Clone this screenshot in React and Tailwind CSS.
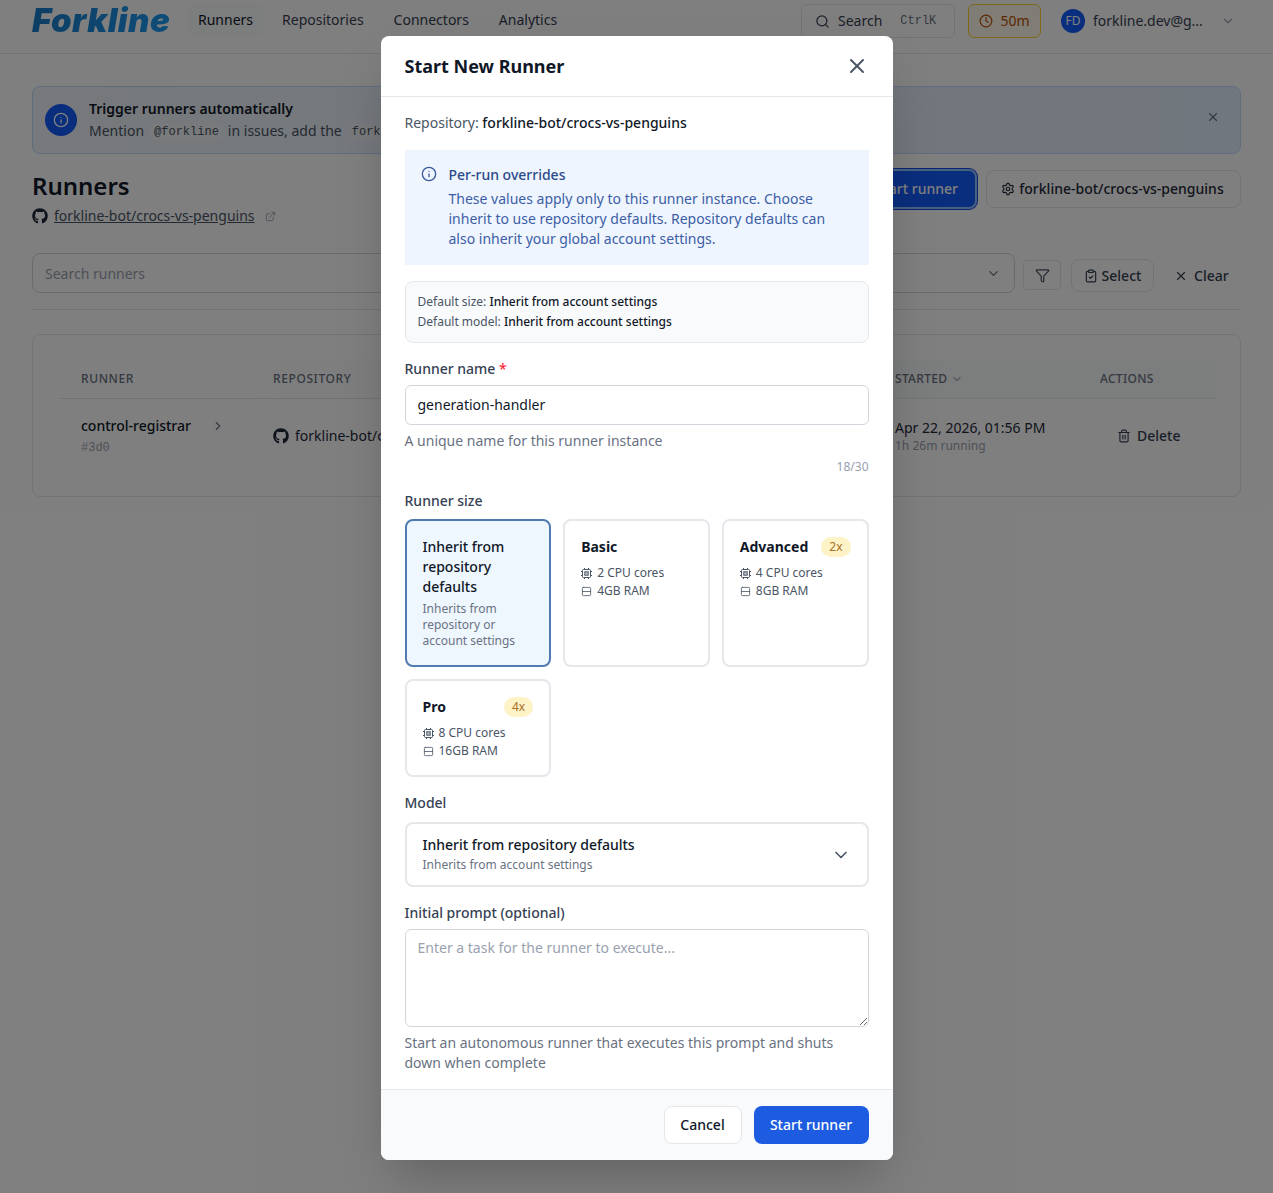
import React from 'react';
import {
  Info, X, Search, Clock, ChevronDown, ChevronRight, ExternalLink, Settings,
  Funnel, ClipboardCheck, Trash2, Rows2,
} from 'lucide-react';
import { FaGithub } from 'react-icons/fa';

// lucide's Cpu turns to mush at this size, so a simpler one
function ChipIcon() {
  return (
    <svg width="11" height="11" viewBox="0 0 11 11" fill="none" stroke="currentColor" strokeWidth="1" className="shrink-0">
      <rect x="1.5" y="1.5" width="8" height="8" rx="1" />
      <rect x="3.8" y="3.8" width="3.4" height="3.4" fill="currentColor" fillOpacity="0.35" />
      <path d="M3.5 0v1M7.5 0v1M3.5 10v1M7.5 10v1M0 3.5h1M0 7.5h1M10 3.5h1M10 7.5h1" />
    </svg>
  );
}

function Header() {
  return (
    <header className="h-[54px] border-b border-gray-200 bg-white flex items-start pl-8 pr-[38px]">
      <div className="w-[156px] h-[41px] pt-px flex items-center">
        <span className="font-['Inter',sans-serif] italic font-black text-[33px] tracking-[0.4px] pr-1 bg-linear-to-r from-[#1a7cc8] to-[#1c9cf5] bg-clip-text text-transparent">
          Forkline
        </span>
      </div>
      <nav className="flex items-center text-sm text-gray-700 h-[40px]">
        <span className="px-2.5 py-1.5 rounded-md bg-gray-50 text-gray-900">Runners</span>
        <span className="px-2.5 py-1.5 ml-[9px]">Repositories</span>
        <span className="px-2.5 py-1.5 ml-[10px]">Connectors</span>
        <span className="px-2.5 py-1.5 ml-[10px]">Analytics</span>
      </nav>
      <div className="ml-auto flex items-center h-[42px]">
        <div className="w-[154px] h-[34px] border border-gray-200 rounded-md flex items-center pl-[13px] text-sm text-gray-700">
          <Search size={15} />
          <span className="ml-2">Search</span>
          <span className="ml-[18px] font-['Liberation_Mono',monospace] text-xs text-gray-500">CtrlK</span>
        </div>
        <div className="ml-[13px] w-[73px] h-[34px] border border-amber-300 bg-amber-50 rounded-md flex items-center justify-center gap-[7px] text-sm text-amber-700">
          <Clock size={14} />
          50m
        </div>
        <div className="ml-5 w-6 h-6 rounded-full bg-blue-600 text-white text-xs flex items-center justify-center">FD</div>
        <span className="ml-2 text-sm text-gray-700 w-[110px]">forkline.dev@g...</span>
        <ChevronDown size={14} className="ml-[18px] text-gray-400" />
      </div>
    </header>
  );
}

function Background() {
  return (
    <div className="h-[1193px] bg-white overflow-hidden">
      <Header />
      <main className="px-8 pt-8 w-[1273px]">
        <div className="h-[68px] border border-blue-200 bg-linear-to-r from-[#eef3f9] to-[#e3eefc] rounded-lg flex items-center pl-3 pr-5 w-[1209px]">
          <div className="w-8 h-8 rounded-full bg-blue-600 flex items-center justify-center text-white">
            <Info size={16} />
          </div>
          <div className="ml-3">
            <div className="text-sm font-semibold text-gray-900">Trigger runners automatically</div>
            <div className="text-sm text-gray-600 mt-0.5 flex items-center gap-[5px]">
              Mention
              <code className="px-1 ml-px mt-[2px] bg-gray-100 rounded font-['Liberation_Mono',monospace] text-xs">@forkline</code>
              in issues, add the
              <code className="px-1 ml-px mt-[2px] bg-gray-100 rounded font-['Liberation_Mono',monospace] text-xs">forkline</code>
            </div>
          </div>
          <X size={14} className="ml-auto mb-1.5 text-gray-500" />
        </div>

        <div className="flex items-start justify-between mt-[16px]">
          <div>
            <h1 className="text-2xl font-semibold text-gray-900 leading-8">Runners</h1>
            <div className="flex items-center gap-1.5 text-sm text-gray-600 mt-1">
              <FaGithub size={16} className="text-gray-800" />
              <span className="underline">forkline-bot/crocs-vs-penguins</span>
              <ExternalLink size={11} className="ml-1 text-gray-400" />
            </div>
          </div>
          <div className="flex items-center gap-[9px] -mt-[1px]">
            <button className="h-[40px] w-[130px] rounded-lg bg-blue-600 border-2 border-blue-300 ring-1 ring-blue-700 text-sm text-white font-medium flex items-center justify-end pr-[17px]">Start runner</button>
            <button className="h-[38px] w-[255px] rounded-lg border border-gray-200 bg-white flex items-center justify-center gap-1 pr-[2px] text-sm font-medium text-gray-800">
              <Settings size={14} />
              forkline-bot/crocs-vs-penguins
            </button>
          </div>
        </div>

        <div className="flex items-center mt-[27px] h-[40px]">
          <div className="w-[640px] h-[40px] border border-gray-300 rounded-lg flex items-center pl-3 pt-px text-sm text-gray-400">Search runners</div>
          <div className="ml-[4px] w-[339px] h-[40px] border border-gray-300 rounded-lg flex items-center justify-end pr-[13px] text-gray-500">
            <ChevronDown size={15} />
          </div>
          <button className="ml-2 w-[38px] h-[30px] mt-1 border border-gray-200 rounded flex items-center justify-center text-gray-600">
            <Funnel size={15} />
          </button>
          <button className="ml-[10px] w-[83px] h-[33px] mt-[5px] border border-gray-200 rounded-lg flex items-center justify-center gap-1 text-sm font-medium text-gray-700">
            <ClipboardCheck size={14} />
            Select
          </button>
          <button className="ml-5 mt-[5px] flex items-center gap-1.5 text-sm font-medium text-gray-700">
            <X size={14} />
            Clear
          </button>
        </div>
        <div className="border-b border-gray-200 mt-[16px]" />

        <div className="mt-[24px] h-[163px] border border-gray-200 rounded-lg pt-[24px] pl-[27px] pr-[24px]">
          <div className="h-[40px] border-b border-gray-200 bg-linear-to-r from-white via-gray-50 to-gray-50 flex items-center text-xs font-medium uppercase tracking-wider text-gray-500 pl-[21px]">
            <span className="w-[192px]">Runner</span>
            <span className="w-[622px]">Repository</span>
            <span className="w-[205px] flex items-center gap-1 tracking-wide">Started <ChevronDown size={12} /></span>
            <span className="tracking-wide">Actions</span>
          </div>
          <div className="h-[74px] flex items-center pl-[21px]">
            <div className="w-[192px]">
              <div className="flex items-center text-sm font-medium text-gray-900">
                control-registrar
                <ChevronRight size={14} className="ml-5 text-gray-500" />
              </div>
              <div className="text-xs text-gray-400 font-['Liberation_Mono',monospace] mt-1">#3d0</div>
            </div>
            <div className="w-[622px] flex items-center gap-1.5 text-sm text-gray-800">
              <FaGithub size={16} />
              forkline-bot/crocs-vs-penguins
            </div>
            <div className="w-[222px]">
              <div className="text-sm text-gray-800">Apr 22, 2026, 01:56 PM</div>
              <div className="text-xs text-gray-400">1h 26m running</div>
            </div>
            <div className="flex items-center gap-1.5 text-sm font-medium text-gray-700">
              <Trash2 size={14} />
              Delete
            </div>
          </div>
        </div>
      </main>
    </div>
  );
}

function SizeCard({ name, badge, cpu, ram }) {
  return (
    <div className="border-2 border-gray-200 rounded-lg px-4 pt-4 pb-[15px] bg-white">
      <div className="flex items-center justify-between h-5">
        <span className="text-sm font-bold text-gray-900">{name}</span>
        {badge && <span className="px-2 h-5 flex items-center rounded-full bg-amber-100 text-xs text-[#a8702a]">{badge}</span>}
      </div>
      <div className="mt-[7px] text-xs leading-[18px] text-gray-600">
        <div className="flex items-center gap-[5px]"><ChipIcon />{cpu}</div>
        <div className="flex items-center gap-[5px]"><Rows2 size={11} strokeWidth={1.75} />{ram}</div>
      </div>
    </div>
  );
}

function Modal() {
  return (
    <div className="absolute inset-0 bg-black/50 flex justify-center items-start pt-9">
      <div className="w-[512px] h-[1124px] bg-white rounded-lg shadow-2xl flex flex-col overflow-hidden">
        <div className="h-[61px] shrink-0 border-b border-gray-200 flex items-center justify-between pl-6 pr-6">
          <h2 className="text-lg font-bold text-gray-900">Start New Runner</h2>
          <X size={24} strokeWidth={2} className="text-gray-600" />
        </div>

        <div className="flex-1 px-6 pt-4">
          <div className="text-sm text-gray-600 leading-5">
            Repository: <span className="font-medium text-gray-900">forkline-bot/crocs-vs-penguins</span>
          </div>

          <div className="mt-[17px] h-[115px] bg-[#eef5fe] pl-4 pr-4 pt-[15px] flex">
            <Info size={16} className="mt-[1px] text-[#3a5a9c] shrink-0" />
            <div className="ml-[12px]">
              <div className="text-sm font-medium leading-5 text-[#2b4a8b]">Per-run overrides</div>
              <div className="text-sm leading-5 mt-[4px] text-[#3d5ea6]">
                These values apply only to this runner instance. Choose inherit to use repository defaults. Repository defaults can also inherit your global account settings.
              </div>
            </div>
          </div>

          <div className="mt-4 h-[62px] border border-gray-200 bg-gray-50 rounded-lg px-3 py-2.5 text-xs leading-5 text-gray-600">
            <div>Default size: <span className="font-medium text-gray-900">Inherit from account settings</span></div>
            <div>Default model: <span className="font-medium text-gray-900">Inherit from account settings</span></div>
          </div>

          <div className="mt-4 text-sm font-medium leading-5 text-gray-700">
            Runner name <span className="text-red-500">*</span>
          </div>
          <div className="mt-[6px] h-10 border border-gray-300 rounded-md px-3 flex items-center text-sm text-gray-900">generation-handler</div>
          <div className="mt-[6px] text-sm leading-5 text-gray-500">A unique name for this runner instance</div>
          <div className="mt-[8px] text-xs leading-4 text-right text-gray-400">18/30</div>

          <div className="mt-[16px] text-sm font-medium leading-5 text-gray-700">Runner size</div>
          <div className="mt-2 grid grid-cols-3 gap-3">
            <div className="h-[148px] border-2 border-[#4f7bb0] bg-[#eef6fe] rounded-lg px-4 py-4">
              <div className="text-sm font-medium leading-5 text-gray-900">Inherit from repository defaults</div>
              <div className="text-xs leading-4 mt-[4px] text-gray-500">Inherits from repository or account settings</div>
            </div>
            <SizeCard name="Basic" cpu="2 CPU cores" ram="4GB RAM" />
            <SizeCard name="Advanced" badge="2x" cpu="4 CPU cores" ram="8GB RAM" />
            <SizeCard name="Pro" badge="4x" cpu="8 CPU cores" ram="16GB RAM" />
          </div>

          <div className="mt-4 text-sm font-medium leading-5 text-gray-700">Model</div>
          <div className="mt-[9px] h-[65px] border-2 border-gray-200 rounded-lg px-4 flex items-center justify-between">
            <div className="-mt-[2px]">
              <div className="text-sm font-medium leading-5 text-gray-900">Inherit from repository defaults</div>
              <div className="text-xs leading-4 mt-[2px] text-gray-500">Inherits from account settings</div>
            </div>
            <ChevronDown size={20} className="text-gray-600" />
          </div>

          <div className="mt-4 text-sm font-medium leading-5 text-gray-700">Initial prompt (optional)</div>
          <textarea
            readOnly
            placeholder="Enter a task for the runner to execute..."
            className="block mt-[6px] w-full h-[98px] border border-gray-300 rounded-md px-3 py-2 text-sm leading-5 placeholder:text-gray-400"
          />
          <div className="mt-[6px] text-sm leading-5 text-gray-500">
            Start an autonomous runner that executes this prompt and shuts down when complete
          </div>
        </div>

        <div className="h-[71px] shrink-0 border-t border-gray-200 bg-gray-50 flex items-start justify-end gap-3 pt-4 px-6">
          <button className="w-[78px] h-[38px] border border-gray-200 bg-white rounded-lg text-sm font-medium text-gray-900">Cancel</button>
          <button className="w-[115px] h-[38px] bg-[#1d5ce0] rounded-lg text-sm font-medium text-white">Start runner</button>
        </div>
      </div>
    </div>
  );
}

export default function App() {
  return (
    <div className="relative h-[1193px] overflow-hidden font-['Noto_Sans',sans-serif]">
      <Background />
      <Modal />
    </div>
  );
}
